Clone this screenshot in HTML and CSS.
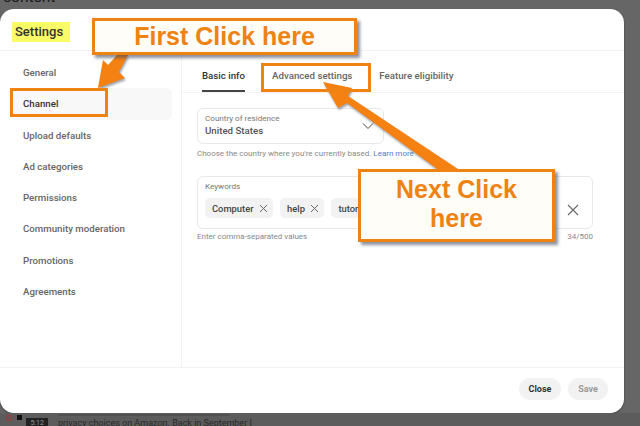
FILE: index.html
```html
<!DOCTYPE html>
<html lang="en">
<head>
    <meta charset="UTF-8">
    <title>Settings</title>
    <link rel="stylesheet" href="styles.css">
</head>
<body>
    <div class="page-top">content</div>

    <div class="modal">
        <div class="modal-head"><span class="modal-title">Settings</span></div>
        <div class="modal-body">
            <nav class="side">
                <a class="side-item">General</a>
                <a class="side-item active">Channel</a>
                <a class="side-item">Upload defaults</a>
                <a class="side-item">Ad categories</a>
                <a class="side-item">Permissions</a>
                <a class="side-item">Community moderation</a>
                <a class="side-item">Promotions</a>
                <a class="side-item">Agreements</a>
            </nav>
            <div class="main">
                <div class="tabs">
                    <a class="tab selected">Basic info</a>
                    <a class="tab">Advanced settings</a>
                    <a class="tab">Feature eligibility</a>
                </div>
                <div class="panel">
                    <div class="field country">
                        <div class="field-label">Country of residence</div>
                        <div class="field-value">United States</div>
                        <svg class="chevron" width="12" height="8" viewBox="0 0 12 8"><path d="M1 1.5l5 5 5-5" fill="none" stroke="#444" stroke-width="1"/></svg>
                    </div>
                    <p class="hint">Choose the country where you're currently based. <a class="link">Learn more</a></p>
                    <div class="field keywords">
                        <div class="field-label">Keywords</div>
                        <div class="chips">
                            <span class="chip">Computer <svg width="9" height="9" viewBox="0 0 9 9"><path d="M1 1l7 7M8 1l-7 7" stroke="#666" fill="none"/></svg></span>
                            <span class="chip">help <svg width="9" height="9" viewBox="0 0 9 9"><path d="M1 1l7 7M8 1l-7 7" stroke="#666" fill="none"/></svg></span>
                            <span class="chip">tutorials</span>
                        </div>
                        <svg class="clear" width="12" height="12" viewBox="0 0 12 12"><path d="M1 1l10 10M11 1L1 11" stroke="#666" stroke-width="1.1" fill="none"/></svg>
                    </div>
                    <div class="hint-row">
                        <span>Enter comma-separated values</span>
                        <span>34/500</span>
                    </div>
                </div>
            </div>
        </div>
        <div class="modal-foot">
            <button class="btn">Close</button>
            <button class="btn off">Save</button>
        </div>
    </div>

    <div class="page-bottom">
        <div class="thumb">
            <span class="thumb-dot"></span>
            <span class="thumb-block"></span>
            <span class="time">5:12</span>
        </div>
        <div class="snippet">
            <div class="snippet-prev"></div>
            <div class="snippet-text">privacy choices on Amazon. Back in September I</div>
        </div>
    </div>

    <!-- annotations drawn on top of the screenshot -->
    <svg class="arrows" width="640" height="426" viewBox="0 0 640 426">
        <polygon class="arrow" points="98,88 125,78 119,72 128,55 117,55 108,65 103,60"/>
        <polygon class="arrow" points="323,82 352,88 348,96 458,169 440,171 347,103 338,108"/>
    </svg>
    <div class="mark mark-channel"></div>
    <div class="mark mark-tab"></div>
    <div class="callout callout-first">First Click here</div>
    <div class="callout callout-next">Next Click<br>here</div>
</body>
</html>
```

FILE: styles.css
```css
* {
    box-sizing: border-box;
}
html, body {
    margin: 0;
    height: 426px;
    overflow: hidden;
}
body {
    position: relative;
    background-color: #666;
    font-family: Roboto, Arial, sans-serif;
    color: #555;
}
.page-top {
    height: 9px;
    padding-left: 3px;
    overflow: hidden;
    font-size: 15.5px;
    line-height: 0;
    color: #1a1a1a;
    transform: translateY(-3px);
}
.modal {
    width: 624px;
    height: 404px;
    display: flex;
    flex-direction: column;
    background: #fff;
    border-radius: 14px;
    box-shadow: 0 1px 2px rgba(0, 0, 0, 0.4);
}
.modal-head {
    height: 42px;
    flex: none;
    padding: 12px 0 0 12px;
    border-bottom: 1px solid #f2f2f2;
}
.modal-title {
    display: inline-block;
    height: 20px;
    padding: 0 7px 0 3px;
    background: #fbfb66;
    font-size: 13px;
    font-weight: 500;
    line-height: 20px;
    color: #333;
}
.modal-body {
    flex: 1;
    display: flex;
    min-height: 0;
}
.side {
    width: 182px;
    flex: none;
    padding: 6px 9px 0 10px;
    border-right: 1px solid #f2f2f2;
}
.side-item {
    display: block;
    height: 31.3px;
    padding-left: 13px;
    font-size: 9.7px;
    line-height: 31px;
    font-weight: 500;
    color: #666;
}
.side-item.active {
    background: #f8f8f8;
    border-radius: 6px;
    color: #333;
}
.main {
    flex: 1;
    min-width: 0;
}
.tabs {
    height: 42px;
    display: flex;
    gap: 27px;
    padding-left: 20px;
    border-bottom: 1px solid #f2f2f2;
}
.tab {
    height: 41px;
    padding-top: 18px;
    font-size: 9.7px;
    line-height: 14px;
    font-weight: 500;
    color: #666;
}
.tab.selected {
    border-bottom: 2px solid #444;
    color: #333;
}
.panel {
    padding: 15px 31px 0 15px;
}
.field {
    position: relative;
    border: 1px solid #e8e8e8;
    border-radius: 6px;
}
.country {
    width: 187px;
    height: 36px;
    padding: 4px 7px;
}
.field-label {
    font-size: 8.1px;
    line-height: 11px;
    color: #777;
}
.field-value {
    font-size: 9.7px;
    line-height: 14px;
    font-weight: 500;
    color: #555;
}
.chevron {
    position: absolute;
    top: 13px;
    right: 9px;
}
.hint {
    margin: 4px 0 0;
    font-size: 8px;
    line-height: 11px;
    color: #888;
}
.link {
    color: #4a80c8;
}
.keywords {
    height: 53px;
    margin-top: 17px;
    padding: 4px 7px;
}
.chips {
    display: flex;
    gap: 7.5px;
    margin-top: 6px;
}
.chip {
    display: flex;
    align-items: center;
    gap: 5px;
    height: 20px;
    padding: 0 5px 0 7px;
    background: #f2f2f2;
    border-radius: 5px;
    font-size: 9.4px;
    font-weight: 500;
    color: #444;
}
.clear {
    position: absolute;
    top: 27px;
    right: 13px;
}
.hint-row {
    display: flex;
    justify-content: space-between;
    margin-top: 2px;
    font-size: 8px;
    line-height: 11px;
    color: #888;
}
.modal-foot {
    height: 46px;
    flex: none;
    display: flex;
    justify-content: flex-end;
    gap: 7px;
    padding: 10px 16px 0 0;
    border-top: 1px solid #f2f2f2;
}
.btn {
    height: 22px;
    padding: 0;
    width: 42px;
    border: none;
    border-radius: 11px;
    background: #f2f2f2;
    font-family: Roboto, Arial, sans-serif;
    font-size: 9px;
    font-weight: 700;
    color: #333;
}
.btn.off {
    width: 40px;
    color: #999;
}
.page-bottom {
    height: 13px;
    display: flex;
    overflow: hidden;
    background: #5c5c5c;
}
.thumb {
    width: 48px;
    height: 13px;
    display: flex;
    align-items: flex-start;
    gap: 5px;
    padding: 2px 0 0 6px;
}
.thumb-dot {
    width: 6px;
    height: 6px;
    border: 1px solid #a33;
    border-radius: 50%;
}
.thumb-block {
    width: 6px;
    height: 5px;
    background: #111;
}
.time {
    width: 23px;
    height: 11px;
    margin: 3px 0 0 -1px;
    background: #222;
    font-size: 7px;
    line-height: 10px;
    text-align: center;
    color: #999;
}
.snippet {
    margin-left: 10px;
}
.snippet-prev {
    width: 172px;
    height: 2px;
    margin-top: 1px;
    background: #505050;
}
.snippet-text {
    margin-top: 1px;
    font-size: 9px;
    line-height: 12px;
    color: #2a2a2a;
}
.arrows {
    position: absolute;
    top: 0;
    left: 0;
}
.arrow {
    fill: #f58113;
    filter: drop-shadow(1px 2px 1px rgba(60, 70, 90, 0.5));
}
.mark {
    position: absolute;
    border: 3px solid #ee8312;
}
.mark-channel {
    left: 10px;
    top: 88px;
    width: 98px;
    height: 29px;
}
.mark-tab {
    left: 261px;
    top: 63px;
    width: 110px;
    height: 29px;
}
.callout {
    position: absolute;
    background: #fffdf8;
    border: 3px solid #ee8312;
    box-shadow: 3px 3px 3px rgba(60, 70, 90, 0.6);
    font-family: "Liberation Sans", Arial, sans-serif;
    font-size: 25px;
    font-weight: 700;
    line-height: 29px;
    text-align: center;
    color: #ee8312;
}
.callout-first {
    left: 92px;
    top: 18px;
    width: 265px;
    height: 37px;
    line-height: 31px;
}
.callout-next {
    left: 358px;
    top: 169px;
    width: 197px;
    height: 73px;
    padding-top: 3px;
}
```
